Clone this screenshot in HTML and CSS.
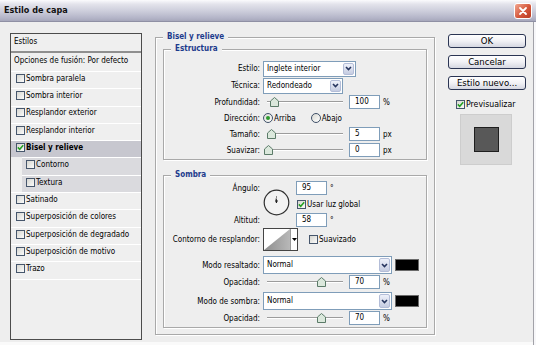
FILE: index.html
```html
<!DOCTYPE html>
<html lang="es">

	<head>
		<meta charset="UTF-8">
		<title>Estilo de capa</title>
		<link rel="stylesheet" href="styles.css">
	</head>

	<body>
		<div class="window">
			<div class="titlebar">
				<span class="title">Estilo de capa</span>
				<span class="close">
					<svg width="10" height="10" viewBox="0 0 10 10"><path d="M2 2 L8 8 M8 2 L2 8" stroke="#fff" stroke-width="1.8" stroke-linecap="round"/></svg>
				</span>
			</div>

			<div class="content">
				<!-- lista de estilos -->
				<div class="styles-list">
					<div class="list-head">Estilos</div>
					<div class="list-blend">Opciones de fusión: Por defecto</div>
					<div class="item"><span class="cb"></span>Sombra paralela</div>
					<div class="item"><span class="cb"></span>Sombra interior</div>
					<div class="item"><span class="cb"></span>Resplandor exterior</div>
					<div class="item"><span class="cb"></span>Resplandor interior</div>
					<div class="item on">
						<span class="cb"><svg width="7" height="7" viewBox="0 0 7 7"><path d="M0.8 3.4 L2.7 5.3 L6.2 1.2" fill="none" stroke="#23a023" stroke-width="1.5"/></svg></span>Bisel y relieve
					</div>
					<div class="item sub"><span class="cb"></span>Contorno</div>
					<div class="item sub"><span class="cb"></span>Textura</div>
					<div class="item"><span class="cb"></span>Satinado</div>
					<div class="item"><span class="cb"></span>Superposición de colores</div>
					<div class="item"><span class="cb"></span>Superposición de degradado</div>
					<div class="item"><span class="cb"></span>Superposición de motivo</div>
					<div class="item"><span class="cb"></span>Trazo</div>
					<div class="list-end"></div>
				</div>

				<!-- opciones -->
				<fieldset class="group bevel">
					<legend>Bisel y relieve</legend>

					<fieldset class="group structure">
						<legend>Estructura</legend>
						<div class="row h17">
							<span class="lbl">Estilo:</span>
							<div class="select sel-style">
								<span class="value">Inglete interior</span>
								<span class="arrow"><svg width="7" height="5" viewBox="0 0 7 5"><path d="M1 1 L3.5 3.5 L6 1" fill="none" stroke="#26355e" stroke-width="1.6"/></svg></span>
							</div>
						</div>
						<div class="row h17">
							<span class="lbl">Técnica:</span>
							<div class="select sel-tech">
								<span class="value">Redondeado</span>
								<span class="arrow"><svg width="7" height="5" viewBox="0 0 7 5"><path d="M1 1 L3.5 3.5 L6 1" fill="none" stroke="#26355e" stroke-width="1.6"/></svg></span>
							</div>
						</div>
						<div class="row h16">
							<span class="lbl">Profundidad:</span>
							<div class="slider"><svg class="thumb" style="left:7px" width="9" height="10" viewBox="0 0 9 10"><polygon points="0.5,4 4.5,0.5 8.5,4 8.5,9.5 0.5,9.5" fill="#dbe8dc" stroke="#5b7b68"/></svg></div>
							<span class="field">100</span><span class="unit">%</span>
						</div>
						<div class="row h16">
							<span class="lbl">Dirección:</span>
							<span class="radio on"></span><span class="opt">Arriba</span>
							<span class="radio"></span><span class="opt">Abajo</span>
						</div>
						<div class="row h16">
							<span class="lbl">Tamaño:</span>
							<div class="slider"><svg class="thumb" style="left:4px" width="9" height="10" viewBox="0 0 9 10"><polygon points="0.5,4 4.5,0.5 8.5,4 8.5,9.5 0.5,9.5" fill="#dbe8dc" stroke="#5b7b68"/></svg></div>
							<span class="field">5</span><span class="unit">px</span>
						</div>
						<div class="row h16">
							<span class="lbl">Suavizar:</span>
							<div class="slider"><svg class="thumb" style="left:1px" width="9" height="10" viewBox="0 0 9 10"><polygon points="0.5,4 4.5,0.5 8.5,4 8.5,9.5 0.5,9.5" fill="#dbe8dc" stroke="#5b7b68"/></svg></div>
							<span class="field">0</span><span class="unit">px</span>
						</div>
					</fieldset>

					<fieldset class="group shadow">
						<legend>Sombra</legend>
						<div class="angle">
							<span class="lbl a-top">Ángulo:</span>
							<div class="dial">
								<svg width="27" height="27" viewBox="0 0 27 27">
									<circle cx="13.5" cy="13.5" r="12.3" fill="#f3f3f3" stroke="#2e2e2e" stroke-width="1.2"/>
									<path d="M13.5 14 L13.2 9.5" stroke="#1e1e1e" stroke-width="1.2"/>
									<path d="M12 12 H15 M13 8 H14" stroke="#1e1e1e"/>
								</svg>
							</div>
							<div class="fline f-top"><span class="field">95</span><span class="unit">°</span></div>
							<div class="fline f-mid">
								<span class="cb"><svg width="7" height="7" viewBox="0 0 7 7"><path d="M0.8 3.4 L2.7 5.3 L6.2 1.2" fill="none" stroke="#23a023" stroke-width="1.5"/></svg></span>Usar luz global
							</div>
							<span class="lbl a-bot">Altitud:</span>
							<div class="fline f-bot"><span class="field">58</span><span class="unit">°</span></div>
						</div>
						<div class="row h23 contour-row">
							<span class="lbl">Contorno de resplandor:</span>
							<div class="contour">
								<svg width="26" height="21" viewBox="0 0 26 21">
									<defs>
										<linearGradient id="cg" x1="0" y1="0" x2="1" y2="0">
											<stop offset="0" stop-color="#8e8e8e"/>
											<stop offset="1" stop-color="#b8b8b8"/>
										</linearGradient>
									</defs>
									<polygon points="0,21 26,0 26,21" fill="url(#cg)"/>
								</svg>
								<span class="drop"><svg width="5" height="3" viewBox="0 0 5 3"><path d="M0 0 H5 L2.5 3 Z" fill="#000"/></svg></span>
							</div>
							<span class="cb smooth"></span><span>Suavizado</span>
						</div>
						<div class="row h18 gap5">
							<span class="lbl">Modo resaltado:</span>
							<div class="select sel-mode">
								<span class="value">Normal</span>
								<span class="arrow"><svg width="7" height="5" viewBox="0 0 7 5"><path d="M1 1 L3.5 3.5 L6 1" fill="none" stroke="#26355e" stroke-width="1.6"/></svg></span>
							</div>
							<span class="color"></span>
						</div>
						<div class="row h16">
							<span class="lbl">Opacidad:</span>
							<div class="slider"><svg class="thumb" style="left:54px" width="9" height="10" viewBox="0 0 9 10"><polygon points="0.5,4 4.5,0.5 8.5,4 8.5,9.5 0.5,9.5" fill="#dbe8dc" stroke="#5b7b68"/></svg></div>
							<span class="field">70</span><span class="unit">%</span>
						</div>
						<div class="row h18 gap2">
							<span class="lbl">Modo de sombra:</span>
							<div class="select sel-mode">
								<span class="value">Normal</span>
								<span class="arrow"><svg width="7" height="5" viewBox="0 0 7 5"><path d="M1 1 L3.5 3.5 L6 1" fill="none" stroke="#26355e" stroke-width="1.6"/></svg></span>
							</div>
							<span class="color"></span>
						</div>
						<div class="row h16">
							<span class="lbl">Opacidad:</span>
							<div class="slider"><svg class="thumb" style="left:54px" width="9" height="10" viewBox="0 0 9 10"><polygon points="0.5,4 4.5,0.5 8.5,4 8.5,9.5 0.5,9.5" fill="#dbe8dc" stroke="#5b7b68"/></svg></div>
							<span class="field">70</span><span class="unit">%</span>
						</div>
					</fieldset>
				</fieldset>

				<!-- botones -->
				<div class="actions">
					<button class="btn">OK</button>
					<button class="btn">Cancelar</button>
					<button class="btn">Estilo nuevo...</button>
					<div class="preview-check">
						<span class="cb"><svg width="7" height="7" viewBox="0 0 7 7"><path d="M0.8 3.4 L2.7 5.3 L6.2 1.2" fill="none" stroke="#23a023" stroke-width="1.5"/></svg></span>Previsualizar
					</div>
					<div class="preview"><div class="preview-sq"></div></div>
				</div>
			</div>
		</div>
	</body>

</html>
```

FILE: styles.css
```css
html,
body {
	margin: 0;
	padding: 0;
}

body {
	font-family: "DejaVu Sans Condensed", "DejaVu Sans", sans-serif;
	font-stretch: semi-condensed;
	font-size: 8px;
	line-height: 11px;
	color: #000;
	background: #eeeeee;
}

.window {
	width: 536px;
	height: 345px;
	background: #eeeeee;
	overflow: hidden;
}

/* barra de titulo */
.titlebar {
	height: 22px;
	box-sizing: border-box;
	display: flex;
	align-items: center;
	justify-content: space-between;
	padding: 0 4px;
	background: linear-gradient(#fbfbfd 0%, #e3e3eb 20%, #cbccda 55%, #b4b5c8 85%, #a6a7bb 100%);
	border-bottom: 1px solid #8f90a4;
}

.title {
	font-size: 9px;
	font-weight: bold;
	color: #111;
}

.close {
	width: 18px;
	height: 16px;
	box-sizing: border-box;
	border: 1px solid #fff;
	border-radius: 3px;
	background: linear-gradient(135deg, #f2a690, #d4573b 55%, #b93b23);
	display: flex;
	align-items: center;
	justify-content: center;
}

.content {
	display: flex;
	align-items: flex-start;
	height: 323px;
	box-sizing: border-box;
	padding-left: 10px;
	box-shadow: inset -2px 0 #f7f7f9, inset -3px 0 #a2a2a8, inset 0 -3px #fafafa;
}

/* lista de estilos */
.styles-list {
	width: 132px;
	height: 307px;
	margin-top: 11px;
	flex: none;
	box-sizing: border-box;
	border: 1px solid #4c4c4c;
	background: #efefef;
}

.list-head {
	height: 17px;
	padding-left: 3px;
	line-height: 15px;
	border-bottom: 2px solid #8f8f8f;
}

.list-blend {
	height: 18px;
	padding-left: 3px;
	line-height: 16px;
}

.item {
	display: flex;
	align-items: center;
	height: 17.3px;
	box-sizing: border-box;
	border-top: 1px solid #fff;
	padding: 0 0 3.5px 5px;
}

.item .cb {
	margin-right: 1px;
}

.item.on {
	background: #c7c7cf;
	font-weight: bold;
}

.item.sub {
	margin-left: 11px;
	padding-left: 4px;
	background: #dadade;
}

.list-end {
	border-top: 1px solid #fff;
}

.cb {
	width: 9px;
	height: 9px;
	flex: none;
	box-sizing: border-box;
	border: 1px solid #46566c;
	background: linear-gradient(135deg, #d6d6d0, #fbfbfb);
	display: flex;
}

.cb svg {
	display: block;
}

/* grupos */
.group {
	margin: 0;
	padding: 0 7px;
	min-width: 0;
	border: 1px solid #a9a9a9;
	box-shadow: 1px 1px 0 #fff, inset 1px 1px 0 #fff;
}

.group legend {
	padding: 0 4px;
	font-weight: bold;
	color: #1d3b8c;
	line-height: 12px;
	background: #eeeeee;
}

.bevel {
	width: 280px;
	flex: none;
	box-sizing: border-box;
	margin: 9px 0 0 13px;
	padding-bottom: 6px;
}

.structure {
	padding-top: 5px;
	padding-bottom: 1px;
}

.shadow {
	margin-top: 9px;
	padding-bottom: 1px;
}

.row {
	display: flex;
	align-items: center;
}

.h16 {
	height: 16px;
}

.h17 {
	height: 17px;
}

.h18 {
	height: 18px;
}

.h23 {
	height: 23px;
}

.gap5 {
	margin-top: 5px;
}

.gap2 {
	margin-top: 2px;
}

.lbl {
	width: 89px;
	margin-right: 3px;
	flex: none;
	text-align: right;
}

/* controles */
.select {
	display: flex;
	height: 16px;
	box-sizing: border-box;
	border: 1px solid #7f9db9;
	background: #fff;
}

.select .value {
	flex: 1;
	padding-left: 3px;
	line-height: 14px;
}

.select .arrow {
	width: 11px;
	margin: 1px;
	box-sizing: border-box;
	border: 1px solid #b3bdd8;
	border-radius: 2px;
	background: linear-gradient(#eef1fa, #c5cce1);
	display: flex;
	align-items: center;
	justify-content: center;
}

.sel-style {
	width: 93px;
}

.sel-tech {
	width: 80px;
}

.sel-mode {
	width: 129px;
	height: 18px;
}

.sel-mode .value {
	line-height: 16px;
}

.slider {
	position: relative;
	width: 82px;
	height: 12px;
	margin-right: 4px;
	flex: none;
}

.slider::before {
	content: "";
	position: absolute;
	left: 4px;
	right: 2px;
	top: 5px;
	height: 1px;
	background: #9c9c9c;
	border-bottom: 1px solid #fff;
}

.thumb {
	position: absolute;
	top: 1px;
}

.field {
	width: 31px;
	height: 14px;
	flex: none;
	box-sizing: border-box;
	border: 1px solid #7f9db9;
	background: #fff;
	padding-left: 5px;
	line-height: 12px;
}

.unit {
	margin-left: 3px;
}

.radio {
	width: 10px;
	height: 10px;
	flex: none;
	box-sizing: border-box;
	border-radius: 50%;
	border: 1px solid #3f5068;
	background: linear-gradient(135deg, #d8d8d2, #fff);
	display: flex;
	align-items: center;
	justify-content: center;
}

.radio.on::after {
	content: "";
	width: 4px;
	height: 4px;
	border-radius: 50%;
	background: #2c9a2c;
}

.opt {
	margin-left: 1px;
}

.opt + .radio {
	margin-left: 15px;
}

/* angulo */
.angle {
	display: grid;
	grid-template-columns: 89px 30px 1fr;
	grid-template-rows: 14px 18px 14px;
	column-gap: 3px;
	align-items: center;
}

.angle .lbl {
	width: auto;
	margin: 0;
}

.a-top {
	grid-area: 1 / 1;
}

.a-bot {
	grid-area: 3 / 1;
}

.dial {
	grid-column: 2;
	grid-row: 1 / 4;
	margin-top: -3px;
	height: 27px;
}

.dial svg {
	display: block;
}

.fline {
	display: flex;
	align-items: center;
}

.f-top {
	grid-area: 1 / 3;
}

.f-mid {
	grid-area: 2 / 3;
}

.f-bot {
	grid-area: 3 / 3;
}

.f-mid .cb {
	margin: 0 1px;
}

.contour-row {
	margin-top: 1px;
}

.contour {
	display: flex;
	height: 23px;
	box-sizing: border-box;
	border: 1px solid #444;
	background: #fff;
}

.contour svg {
	display: block;
}

.contour .drop {
	width: 6px;
	border-left: 1px solid #9a9a9a;
	display: flex;
	align-items: center;
	justify-content: center;
}

.smooth {
	margin: 0 1px 0 11px;
}

.color {
	width: 24px;
	height: 12px;
	margin-left: 3px;
	box-sizing: border-box;
	border: 1px solid #6a6a6a;
	background: #000;
}

/* botones */
.actions {
	width: 78px;
	flex: none;
	margin: 12px 0 0 13px;
	display: flex;
	flex-direction: column;
}

.btn {
	height: 14px;
	margin: 0 0 7px;
	padding: 0;
	font: inherit;
	font-size: 9.5px;
	line-height: 12px;
	color: #000;
	border: 1px solid #2b3553;
	border-radius: 3px;
	background: linear-gradient(#ffffff, #f1f1f5 50%, #d5d7e1);
}

.preview-check {
	display: flex;
	align-items: center;
	height: 12px;
	margin: 1px 0 0 8px;
	font-size: 8.7px;
}

.preview-check .cb {
	margin-right: 1px;
}

.preview {
	width: 52px;
	height: 51px;
	margin: 4px 0 0 12px;
	box-sizing: border-box;
	background: #d9d9d9;
	border: 1px solid #cdcdcd;
	display: flex;
	align-items: center;
	justify-content: center;
}

.preview-sq {
	width: 25px;
	height: 25px;
	box-sizing: border-box;
	background: #585858;
	border: 1px solid #1e1e1e;
}
```
